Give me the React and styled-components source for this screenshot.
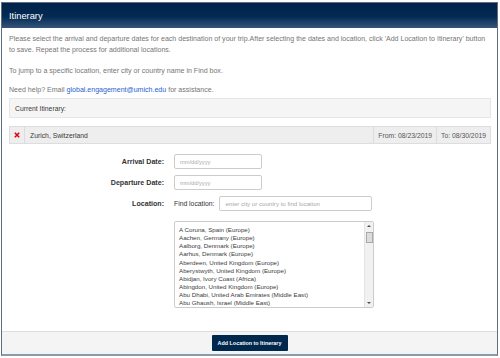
import styled, { createGlobalStyle } from "styled-components";

const GlobalStyle = createGlobalStyle`
  html, body {
    margin: 0;
    background: #ffffff;
    font-family: "Liberation Sans", Arial, sans-serif;
  }
  * { box-sizing: border-box; }
`;

const Modal = styled.div`
  margin: 2px 2px 0 1px;
  height: 354px;
  display: flex;
  flex-direction: column;
  border: 1px solid #5d6e83;
  border-bottom: 2px solid #8a9aad;
`;

const Header = styled.div`
  height: 25px;
  padding-left: 7px;
  display: flex;
  align-items: center;
  color: #ffffff;
  font-size: 9.3px;
  background: linear-gradient(#00234a 0%, #042b54 55%, #35557a 100%);
`;

const Body = styled.div`
  flex: 1;
  padding: 5px 6px 0 7px;
`;

const Para = styled.p`
  margin: 0 -2px ${(p) => p.gap}px 0;
  font-size: 7.05px;
  line-height: 11px;
  color: #767676;
`;

const Link = styled.a`
  color: #1f5fcf;
  text-decoration: none;
`;

const CurrentBox = styled.div`
  margin-top: 3px;
  height: 20px;
  display: flex;
  align-items: center;
  padding-left: 5px;
  background: #f5f5f5;
  border: 1px solid #e6e6e6;
  font-size: 6.8px;
  color: #3a3a3a;
`;

const TripRow = styled.div`
  margin-top: 8px;
  height: 18px;
  display: flex;
  background: #eeeeee;
  border: 1px solid #dddddd;
  font-size: 6.8px;
  color: #3a3a3a;
`;

const Cell = styled.div`
  display: flex;
  align-items: center;
  padding: 0 ${(p) => p.pad}px;
  flex: ${(p) => (p.grow ? 1 : "none")};
  border-left: ${(p) => (p.first ? "none" : "1px solid #dcdcdc")};
  color: ${(p) => p.color || "inherit"};
`;

const Form = styled.div`
  margin-top: 10px;
  display: grid;
  grid-template-columns: 155px 1fr;
  column-gap: 10px;
  row-gap: 6px;
  align-items: center;
`;

const Label = styled.div`
  text-align: right;
  font-weight: bold;
  font-size: 7.1px;
  color: #333333;
`;

const Field = styled.div`
  width: ${(p) => p.w}px;
  height: 15px;
  display: flex;
  align-items: center;
  padding-left: 5px;
  border: 1px solid #cccccc;
  border-radius: 2px;
  background: #ffffff;
  font-size: ${(p) => p.size}px;
  color: #a8a8a8;
`;

const FindRow = styled.div`
  display: flex;
  align-items: center;
  gap: 5px;
  font-size: 6.8px;
  color: #333333;
`;

const ListBox = styled.div`
  grid-column: 2;
  margin-top: 4px;
  width: 200px;
  height: 87px;
  display: flex;
  border: 1px solid #cccccc;
  border-radius: 2px;
  overflow: hidden;
`;

const Options = styled.div`
  flex: 1;
  padding: 4px 0 0 4px;
  font-size: 6.2px;
  line-height: 8.15px;
  color: #3c3c3c;
  white-space: nowrap;
`;

const Scrollbar = styled.div`
  width: 9px;
  display: flex;
  flex-direction: column;
  align-items: center;
  background: #f1f1f1;
  border-left: 1px solid #e4e4e4;
`;

const Arrow = styled.div`
  height: 8px;
  width: 100%;
  display: flex;
  align-items: center;
  justify-content: center;
  &::after {
    content: "";
    border-left: 2px solid transparent;
    border-right: 2px solid transparent;
    ${(p) => (p.down ? "border-top" : "border-bottom")}: 2px solid #505050;
  }
`;

const Thumb = styled.div`
  margin-top: 2px;
  width: 7px;
  height: 11px;
  background: #dcdcdc;
  border: 1px solid #a9a9a9;
`;

const Track = styled.div`
  flex: 1;
`;

const Footer = styled.div`
  height: 23px;
  display: flex;
  align-items: center;
  justify-content: center;
  background: #f4f4f4;
  border-top: 1px solid #dedede;
`;

const AddButton = styled.button`
  width: 76px;
  height: 16px;
  padding: 0;
  border: none;
  border-radius: 1px;
  background: #00274c;
  color: #ffffff;
  font-family: "Liberation Sans", Arial, sans-serif;
  font-weight: bold;
  font-size: 5.4px;
  cursor: pointer;
`;

const locations = [
  "A Coruna, Spain (Europe)",
  "Aachen, Germany (Europe)",
  "Aalborg, Denmark (Europe)",
  "Aarhus, Denmark (Europe)",
  "Aberdeen, United Kingdom (Europe)",
  "Aberystwyth, United Kingdom (Europe)",
  "Abidjan, Ivory Coast (Africa)",
  "Abingdon, United Kingdom (Europe)",
  "Abu Dhabi, United Arab Emirates (Middle East)",
  "Abu Ghaush, Israel (Middle East)",
];

function RemoveIcon() {
  return (
    <svg width="6" height="6" viewBox="0 0 6 6">
      <path d="M0.8 0.8 L5.2 5.2 M5.2 0.8 L0.8 5.2" stroke="#e3000f" strokeWidth="1.6" />
    </svg>
  );
}

function App() {
  return (
    <>
      <GlobalStyle />
      <Modal>
        <Header>Itinerary</Header>
        <Body>
          <Para gap={10}>
            Please select the arrival and departure dates for each destination of your
            trip.After selecting the dates and location, click 'Add Location to Itinerary'
            button to save. Repeat the process for additional locations.
          </Para>
          <Para gap={8}>To jump to a specific location, enter city or country name in Find box.</Para>
          <Para gap={0}>
            Need help? Email <Link href="#">global.engagement@umich.edu</Link> for assistance.
          </Para>
          <CurrentBox>Current Itinerary:</CurrentBox>
          <TripRow>
            <Cell first pad={4}>
              <RemoveIcon />
            </Cell>
            <Cell grow pad={5}>Zurich, Switzerland</Cell>
            <Cell pad={4} color="#555">From: 08/23/2019</Cell>
            <Cell pad={4} color="#555">To: 08/30/2019</Cell>
          </TripRow>
          <Form>
            <Label>Arrival Date:</Label>
            <Field w={88} size={5.7}>mm/dd/yyyy</Field>
            <Label>Departure Date:</Label>
            <Field w={88} size={5.7}>mm/dd/yyyy</Field>
            <Label>Location:</Label>
            <FindRow>
              Find location:
              <Field w={153} size={6.1}>enter city or country to find location</Field>
            </FindRow>
            <ListBox>
              <Options>
                {locations.map((name) => (
                  <div key={name}>{name}</div>
                ))}
              </Options>
              <Scrollbar>
                <Arrow />
                <Thumb />
                <Track />
                <Arrow down />
              </Scrollbar>
            </ListBox>
          </Form>
        </Body>
        <Footer>
          <AddButton>Add Location to Itinerary</AddButton>
        </Footer>
      </Modal>
    </>
  );
}

export default App;
